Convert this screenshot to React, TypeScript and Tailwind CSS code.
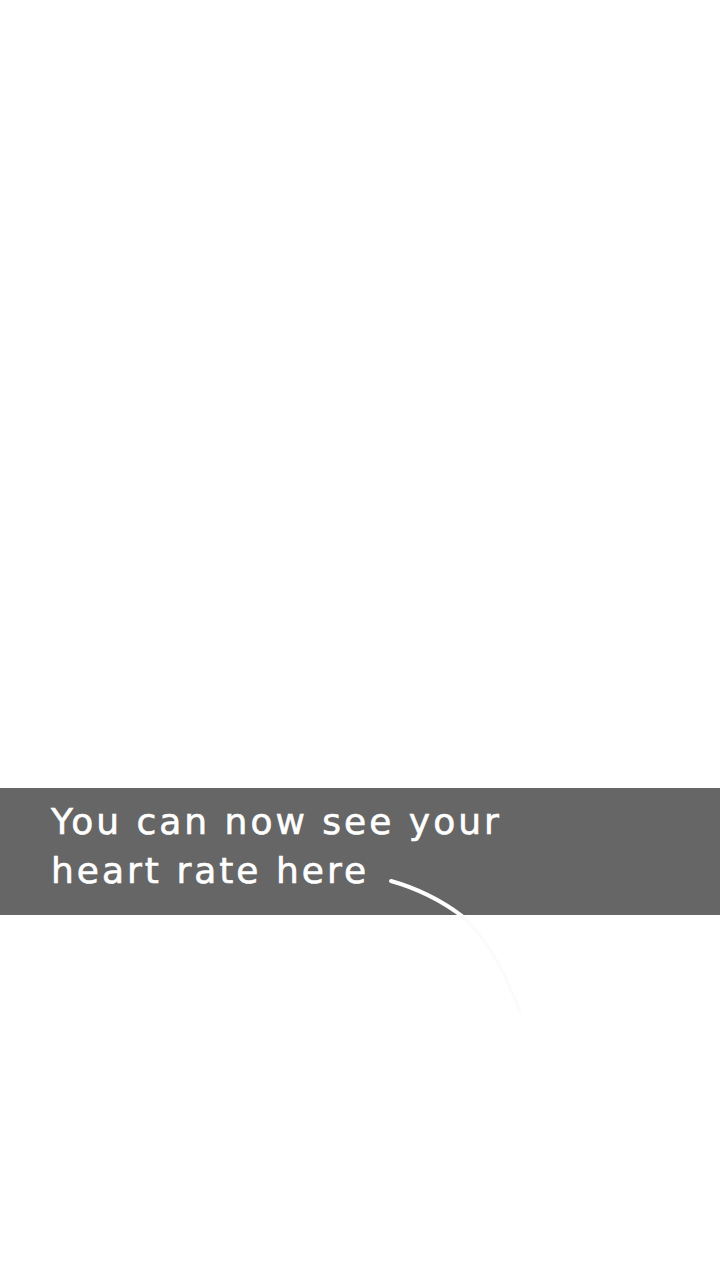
import React from "react";

const App = () => {
  return (
    <div className="w-[720px] h-[1280px] bg-white flex flex-col">
      <div className="h-[788px]" />
      <div className="relative h-[127px] bg-[#666666] pl-[51px] pt-[9px]">
        <p
          className="text-white text-[36px] leading-[49px] tracking-[3px] [-webkit-text-stroke:0.6px_white]"
          style={{ fontFamily: '"DejaVu Sans", sans-serif' }}
        >
          You can now see your
          <br />
          heart rate here
        </p>
        <svg
          className="absolute left-0 top-0 overflow-visible"
          width="720"
          height="127"
          viewBox="0 788 720 127"
        >
          <path
            d="M391 881 Q430 892 462 916"
            fill="none"
            stroke="#ffffff"
            strokeWidth="4"
            strokeLinecap="round"
          />
          <path
            d="M462 916 Q495 945 520 1012"
            fill="none"
            stroke="#fbfbfb"
            strokeWidth="3"
            strokeLinecap="round"
          />
        </svg>
      </div>
      <div className="flex-1" />
    </div>
  );
};

export default App;
